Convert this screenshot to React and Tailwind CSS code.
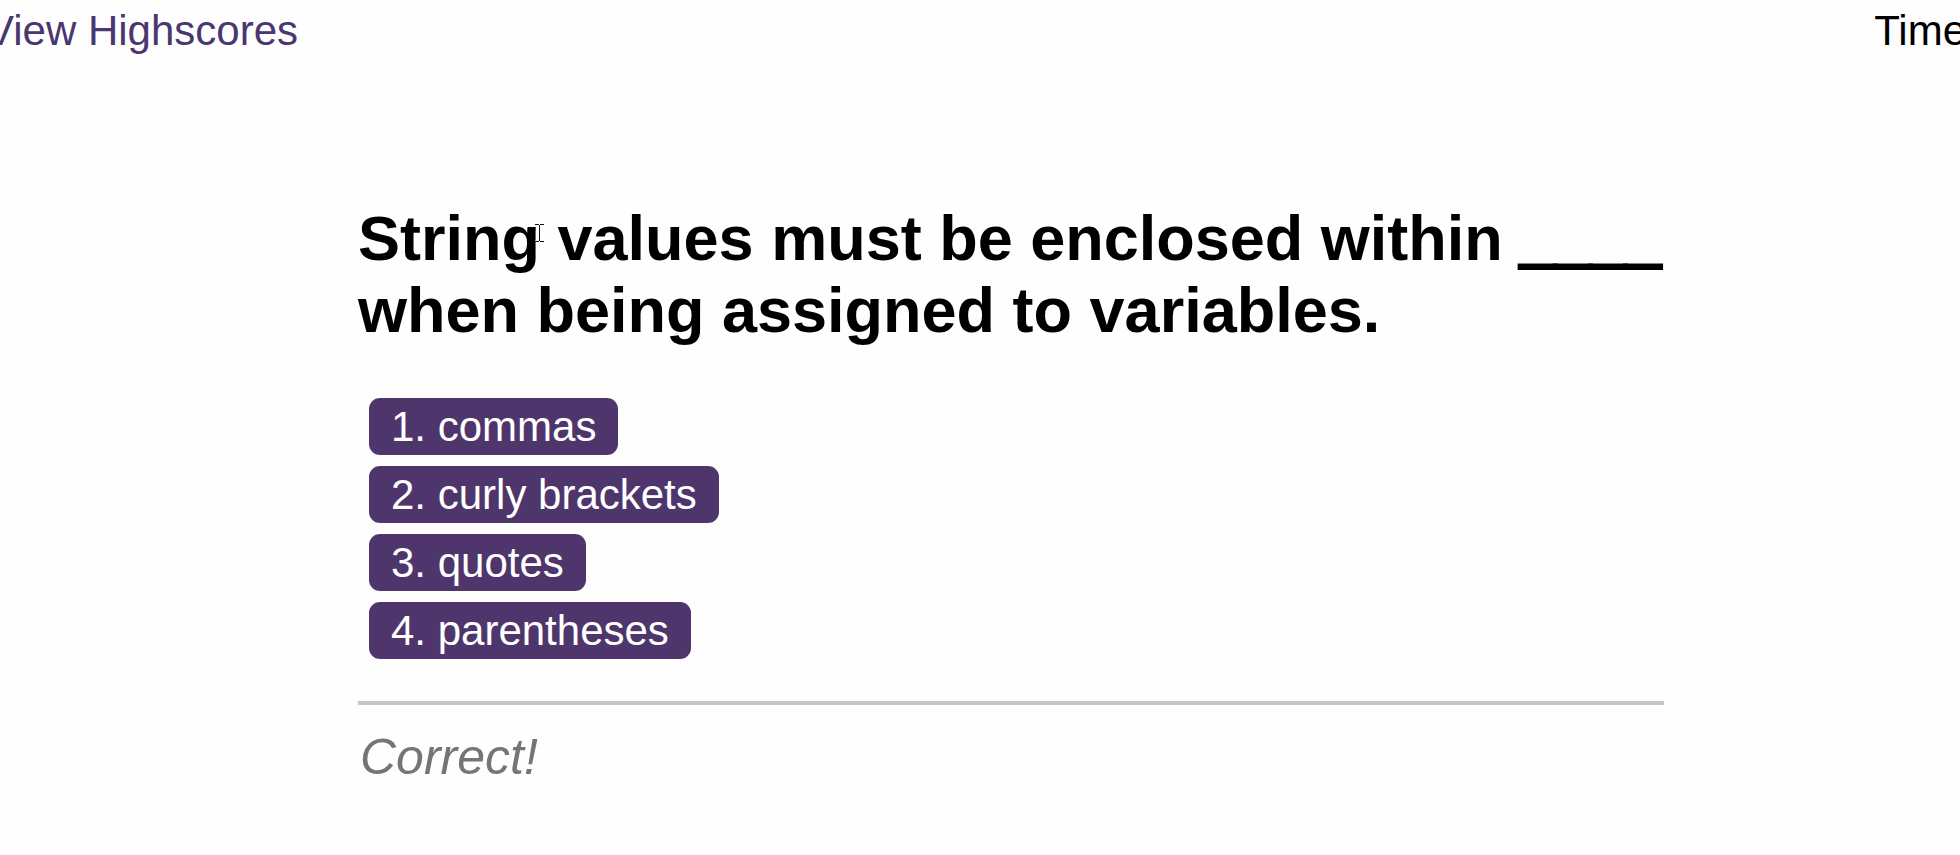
const choices = ["commas", "curly brackets", "quotes", "parentheses"];

function TextCursor() {
  return (
    <svg
      aria-hidden="true"
      viewBox="0 0 9 18"
      className="pointer-events-none absolute left-[177px] top-[22px] h-[18px] w-[9px]"
      fill="none"
    >
      <path d="M0 .5h4M5 .5h4M4.500 1v16M0 17.500h4M5 17.500h4" stroke="#fff" strokeWidth="2" />
      <path d="M0 .5h4M5 .5h4M4.500 1v16M0 17.500h4M5 17.500h4" stroke="#111" strokeWidth="1" />
    </svg>
  );
}

export default function App() {
  return (
    <div className="min-h-screen overflow-x-hidden bg-[#fefefe] font-['Liberation_Sans',Arial,sans-serif] text-black">
      <div className="-mr-[62px]">
        <header className="-ml-3.5 flex justify-between pr-14 pt-1.5 text-[42px] leading-[50px]">
          <a href="#highscores" className="text-[#4a3670]">View Highscores</a>
          <span>Time</span>
        </header>
        <main className="mx-auto mt-[146px] max-w-[1306px]">
          <h1 className="relative text-[63px] font-bold leading-[72px]">
            String values must be enclosed within{" "}
            <span className="[-webkit-text-stroke:4px_black]">____</span> when being assigned to variables.
            <TextCursor />
          </h1>
          <ol className="mt-[52px] flex flex-col items-start gap-[11px] pl-[11px]">
            {choices.map((choice, i) => (
              <li key={choice}>
                <button type="button" className="block rounded-[11px] bg-[#4e366c] px-[22px] text-[42px] leading-[57px] text-white">
                  {i + 1}. {choice}
                </button>
              </li>
            ))}
          </ol>
          <p className="mt-[42px] border-t-4 border-[#c6c5c8] pl-0.5 pt-[22px] text-[50px] italic leading-[60px] text-[#757575]">Correct!</p>
        </main>
      </div>
    </div>
  );
}
